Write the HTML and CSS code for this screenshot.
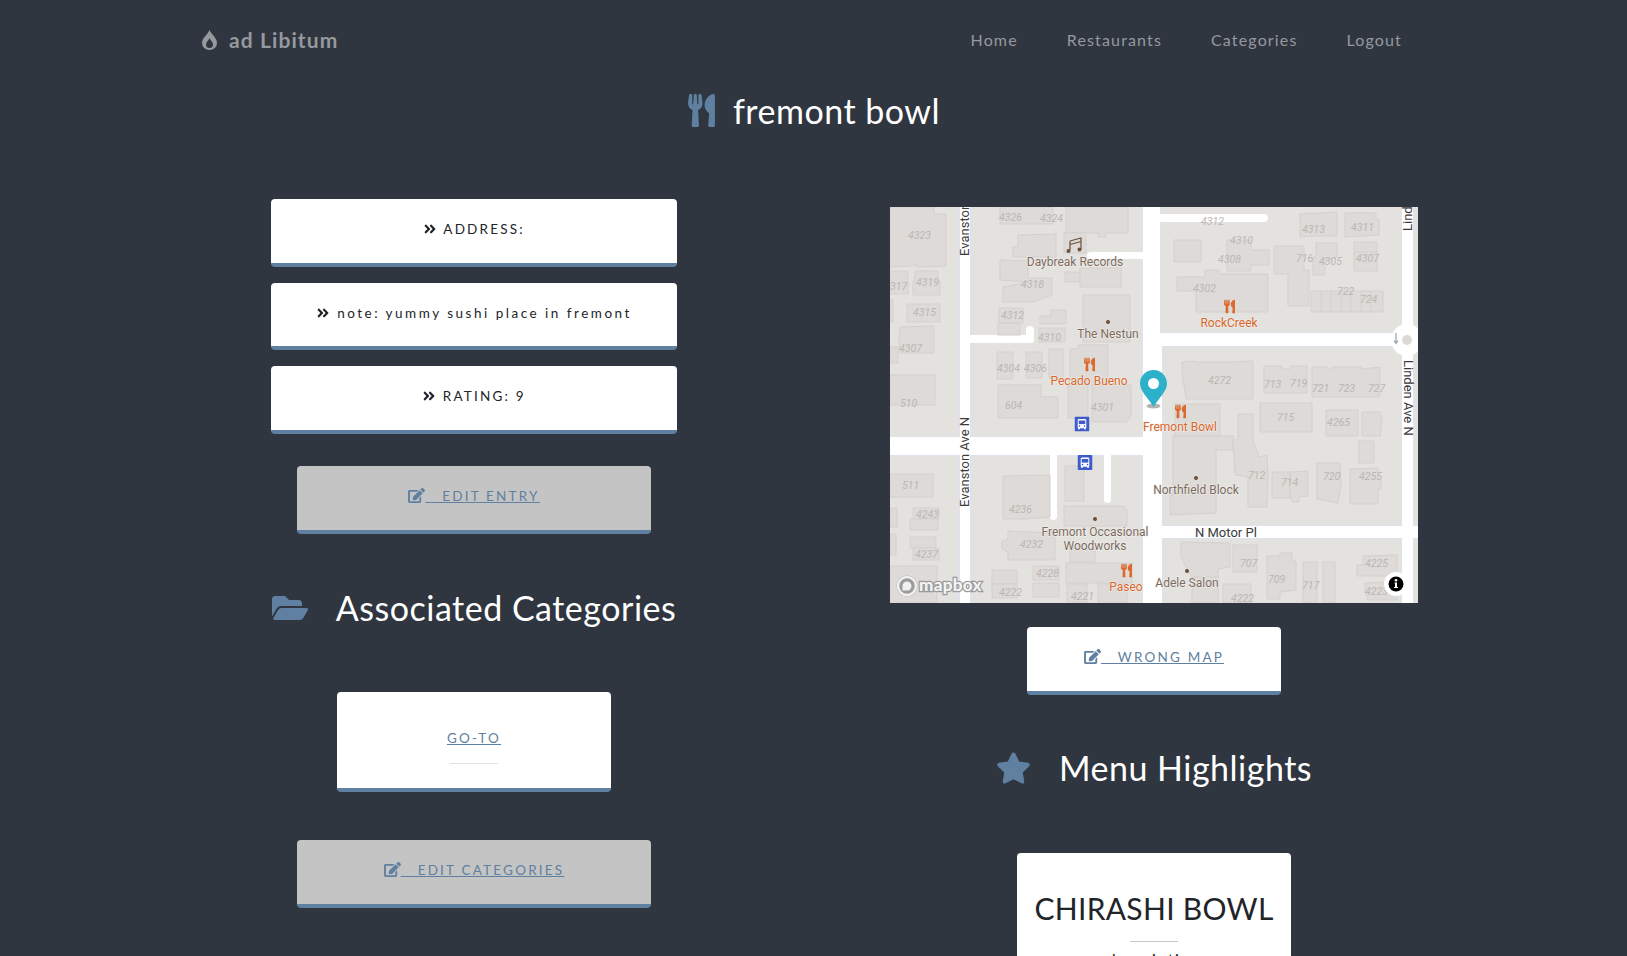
FILE: index.html
```html
<!DOCTYPE html>
<html>
<head>
<title>fremont bowl</title>
<meta charset="utf-8">
<link rel="stylesheet" href="styles.css">
</head>
<body>

<svg class="defs" width="0" height="0">
  <defs>
    <symbol id="i-utensils" viewBox="0 0 416 512"><path d="M207.9 15.2c.8 4.7 16.1 94.5 16.1 128.8 0 52.3-27.8 89.6-68.9 104.6L168 486.7c.7 13.7-10.2 25.3-24 25.3H80c-13.7 0-24.7-11.5-24-25.3l12.9-238.1C27.7 233.6 0 196.2 0 144 0 109.6 15.3 19.9 16.1 15.2 19.3-5.1 61.4-5.4 64 16.3v141.2c1.3 3.4 15.1 3.2 16 0 1.4-25.3 7.9-139.2 8-141.8 3.3-20.8 44.7-20.8 47.9 0 .2 2.7 6.6 116.5 8 141.8.9 3.2 14.8 3.4 16 0V16.3c2.6-21.6 44.8-21.4 48-1.1zm119.2 285.7l-15 185.1c-1.2 14 9.9 26 23.9 26h56c13.3 0 24-10.7 24-24V24c0-13.2-10.7-24-24-24-82.5 0-221.4 178.5-64.9 300.9z"/></symbol>
    <symbol id="i-chevrons" viewBox="0 0 448 512"><path d="M224.3 273l-136 136c-9.4 9.4-24.6 9.4-33.9 0l-22.6-22.6c-9.4-9.4-9.4-24.6 0-33.9l96.4-96.4-96.4-96.4c-9.4-9.4-9.4-24.6 0-33.9L54.3 103c9.4-9.4 24.6-9.4 33.9 0l136 136c9.5 9.4 9.5 24.6.1 34zm192-34l-136-136c-9.4-9.4-24.6-9.4-33.9 0l-22.6 22.6c-9.4 9.4-9.4 24.6 0 33.9l96.4 96.4-96.4 96.4c-9.4 9.4-9.4 24.6 0 33.9l22.6 22.6c9.4 9.4 24.6 9.4 33.9 0l136-136c9.4-9.2 9.4-24.4 0-33.8z"/></symbol>
    <symbol id="i-edit" viewBox="0 0 576 512"><path d="M402.6 83.2l90.2 90.2c3.8 3.8 3.8 10 0 13.8L274.4 405.6l-92.8 10.3c-12.4 1.4-22.9-9.1-21.5-21.5l10.3-92.8L388.8 83.2c3.8-3.8 10-3.8 13.8 0zm162-22.9l-48.8-48.8c-15.2-15.2-39.9-15.2-55.2 0l-35.4 35.4c-3.8 3.8-3.8 10 0 13.8l90.2 90.2c3.8 3.8 10 3.8 13.8 0l35.4-35.4c15.2-15.3 15.2-40 0-55.2zM384 346.2V448H64V128h229.8c3.2 0 6.2-1.3 8.5-3.5l40-40c7.6-7.6 2.2-20.5-8.5-20.5H48C21.5 64 0 85.5 0 112v352c0 26.5 21.5 48 48 48h352c26.5 0 48-21.5 48-48V306.2c0-10.7-12.9-16-20.5-8.5l-40 40c-2.2 2.3-3.5 5.3-3.5 8.5z"/></symbol>
    <symbol id="m-bus" viewBox="0 0 15 15"><rect width="15" height="15" rx="1" fill="#3e5ccb"/><path fill="#fff" d="M4.6 2.6h5.8c.8 0 1.4.6 1.4 1.4v7c0 .4-.2.6-.5.7v.9c0 .3-.2.5-.5.5h-.6c-.3 0-.5-.2-.5-.5v-.8H5.3v.8c0 .3-.2.5-.5.5h-.6c-.3 0-.5-.2-.5-.5v-.9c-.3-.1-.5-.3-.5-.7V4c0-.8.6-1.4 1.4-1.4z"/><rect x="4.2" y="4" width="6.6" height="3.6" fill="#3e5ccb"/><circle cx="5" cy="9.6" r=".8" fill="#3e5ccb"/><circle cx="10" cy="9.6" r=".8" fill="#3e5ccb"/></symbol>
  </defs>
</svg>

<nav class="navbar">
  <a class="brand">
    <svg class="brand-icon" viewBox="0 0 15 20"><path fill-rule="evenodd" d="M7.500 0C8.500 3.500 15 7.500 15 13a7.500 7 0 0 1-15 0C0 8 5.500 5 7.500 0zM7.500 8c-.8 2.500-3.500 4-3.500 6.500a3.500 3.500 0 0 0 7 0C11 12 8.300 10.500 7.500 8z"/></svg>
    <span class="brand-text">ad Libitum</span>
  </a>
  <ul class="nav-links">
    <li>Home</li>
    <li>Restaurants</li>
    <li>Categories</li>
    <li>Logout</li>
  </ul>
</nav>

<h1 class="page-title">
  <svg class="title-icon"><use href="#i-utensils"/></svg>
  <span>fremont bowl</span>
</h1>

<div class="columns">

  <div class="col">
    <div class="card card-wide"><svg class="chev"><use href="#i-chevrons"/></svg> ADDRESS:</div>
    <div class="card card-wide card-note"><svg class="chev"><use href="#i-chevrons"/></svg> note: yummy sushi place in fremont</div>
    <div class="card card-wide"><svg class="chev"><use href="#i-chevrons"/></svg> RATING: 9</div>
    <div class="card card-action"><a class="link"><svg class="edit"><use href="#i-edit"/></svg>&nbsp;&nbsp;&nbsp;EDIT ENTRY</a></div>

    <h2 class="heading heading-cats">
      <svg class="folder" viewBox="0 0 576 512"><path d="M572.694 292.093L500.27 416.248A63.997 63.997 0 0 1 444.989 448H45.025c-18.523 0-30.064-20.093-20.731-36.093l72.424-124.155A64 64 0 0 1 152 256h399.964c18.523 0 30.064 20.093 20.73 36.093zM152 224h328v-48c0-26.51-21.49-48-48-48H272l-64-64H48C21.49 64 0 85.49 0 112v278.046l69.077-118.418C86.214 242.25 118.036 224 152 224z"/></svg>
      <span>Associated Categories</span>
    </h2>

    <div class="card card-small goto">
      <a class="link">GO-TO</a>
      <hr class="rule">
    </div>
    <div class="card card-action edit-cats"><a class="link"><svg class="edit"><use href="#i-edit"/></svg>&nbsp;&nbsp;&nbsp;EDIT CATEGORIES</a></div>
  </div>

  <div class="col col-right">
    <svg class="map" viewBox="0 0 528 396" width="528" height="396">
      <rect class="land" width="528" height="396"/>

      <!-- roads -->
      <g class="casing">
        <rect x="68" y="0" width="14" height="396"/>
        <rect x="252" y="0" width="19" height="139"/>
        <rect x="252" y="139" width="21" height="257"/>
        <rect x="511" y="0" width="13" height="396"/>
        <rect x="0" y="229" width="272" height="20"/>
        <rect x="270" y="125" width="258" height="15"/>
        <rect x="270" y="318" width="258" height="14"/>
      </g>
      <g class="road">
        <rect x="70" y="0" width="10" height="396"/>
        <rect x="253" y="0" width="17" height="139"/>
        <rect x="253" y="139" width="19" height="257"/>
        <rect x="512" y="0" width="11" height="396"/>
        <rect x="0" y="230" width="272" height="18"/>
        <rect x="270" y="126" width="258" height="13"/>
        <rect x="270" y="319" width="258" height="12"/>
        <rect x="268" y="7" width="110" height="8" rx="4"/>
        <rect x="197" y="45" width="60" height="7" rx="3.500"/>
        <rect x="78" y="128" width="66" height="8" rx="3"/>
        <rect x="136" y="119" width="8" height="17" rx="4"/>
        <rect x="160" y="245" width="7" height="68" rx="3.500"/>
        <rect x="214" y="245" width="7" height="51" rx="3.500"/>
        <circle cx="517" cy="133" r="16"/>
      </g>
      <circle class="island" cx="517" cy="133" r="5"/>
      <path class="arrow" d="M506 126v10M504 133.500l2 3 2-3"/>

      <!-- buildings -->
      <g class="bld">
        <polygon points="0,0 44,0 44,7 56,7 56,59 27,60 26,58 20,59 0,60"/>
        <rect x="110" y="0" width="53" height="17"/>
        <polygon points="176,0 238,0 238,26 216,26 216,30 208,30 208,26 176,26"/>
        <rect x="174" y="26" width="22" height="20"/>
        <polygon points="128,28 166,27 166,50 128,50 123,50 123,40 128,40"/>
        <polygon points="110,53 138,54 138,71 162,71 162,88 143,95 113,95 113,80 138,75 110,73"/>
        <rect x="175" y="65" width="15" height="10"/>
        <rect x="190" y="61" width="41" height="19"/>
        <rect x="193" y="88" width="47" height="47"/>
        <rect x="0" y="64" width="18" height="23"/>
        <polygon points="25,64 48,64 48,74 50,74 50,88 23,88 23,74 25,74"/>
        <rect x="17" y="97" width="33" height="18"/>
        <rect x="0" y="93" width="3" height="22"/>
        <polygon points="10,120 44,119 44,146 10,146 9,133"/>
        <rect x="0" y="140" width="8" height="16"/>
        <rect x="0" y="168" width="45" height="30"/>
        <rect x="109" y="101" width="24" height="15"/>
        <rect x="108" y="116" width="22" height="12"/>
        <polygon points="150,109 161,109 161,103 176,103 176,117 150,117"/>
        <rect x="149" y="121" width="26" height="14"/>
        <rect x="107" y="145" width="16" height="27"/>
        <rect x="136" y="145" width="16" height="26"/>
        <rect x="159" y="142" width="14" height="29"/>
        <polygon points="180,142 188,142 188,138 218,138 218,178 180,178"/>
        <polygon points="108,178 151,178 151,190 168,190 168,211 108,211"/>
        <rect x="178" y="178" width="20" height="33"/>
        <polygon points="202,178 241,178 241,209 236,215 202,215"/>

        <polygon points="410,7 447,5 447,29 423,29 410,30"/>
        <polygon points="455,6 486,6 486,12 489,12 489,28 455,30"/>
        <rect x="284" y="33" width="27" height="22"/>
        <polygon points="337,33 361,33 361,43 379,43 379,58 361,58 361,64 337,64"/>
        <polygon points="384,39 414,39 414,63 419,63 419,99 398,99 398,67 384,67"/>
        <polygon points="426,36 447,36 447,50 435,55 435,68 423,68 423,50 426,50"/>
        <rect x="464" y="35" width="23" height="29"/>
        <rect x="421" y="84" width="72" height="21"/>
        <polygon points="287,70 315,70 315,63 329,63 329,67 378,67 378,105 306,105 306,84 287,84"/>
        <polygon points="292,155 305,154 305,155 340,155 363,154 363,192 296,192 292,165"/>
        <polygon points="374,159 392,159 392,162 400,162 400,159 417,159 417,186 374,186"/>
        <polygon points="422,160 437,160 437,162 443,162 443,160 472,160 472,162 490,160 490,190 422,190"/>
        <rect x="285" y="197" width="45" height="32"/>
        <polygon points="283,229 343,229 343,243 326,243 326,306 280,308 280,288 283,288"/>
        <polygon points="348,207 363,207 363,233 369,250 377,248 378,270 377,300 358,300 358,270 345,268 343,233 348,233"/>
        <polygon points="370,196 422,196 422,225 370,225"/>
        <polygon points="436,203 468,203 468,229 436,229"/>
        <polygon points="472,205 490,205 492,215 490,229 472,229"/>
        <rect x="469" y="234" width="15" height="22"/>
        <rect x="382" y="265" width="18" height="26"/>
        <polygon points="400,265 418,264 418,289 409,290 409,295 403,295 400,290"/>
        <polygon points="427,256 450,256 451,278 448,296 427,292"/>
        <polygon points="460,262 488,261 488,273 491,273 491,282 488,282 488,297 460,297"/>
        <polygon points="291,335 340,336 340,360 328,362 328,371 302,371 295,358 291,350"/>
        <rect x="302" y="370" width="26" height="26"/>
        <rect x="333" y="377" width="28" height="19"/>
        <rect x="343" y="338" width="24" height="27"/>
        <polygon points="377,349 390,349 390,346 402,346 402,354 406,354 406,383 390,385 390,392 377,392"/>
        <rect x="413" y="355" width="14" height="41"/>
        <rect x="433" y="355" width="12" height="41"/>
        <polygon points="473,349 507,348 507,369 467,369 467,358 473,358"/>
        <polygon points="475,376 507,375 507,393 478,393 475,386"/>

        <rect x="0" y="267" width="43" height="23"/>
        <rect x="23" y="301" width="26" height="11"/>
        <rect x="20" y="312" width="28" height="11"/>
        <rect x="0" y="301" width="7" height="19"/>
        <rect x="20" y="330" width="26" height="11"/>
        <rect x="23" y="341" width="26" height="12"/>
        <rect x="0" y="327" width="6" height="21"/>
        <rect x="0" y="359" width="47" height="37"/>
        <polygon points="113,269 160,268 160,310 135,312 113,312"/>
        <rect x="175" y="259" width="19" height="35"/>
        <polygon points="174,299 234,299 237,303 237,319 174,319"/>
        <polygon points="118,324 165,326 165,353 118,353 118,345 112,342 112,334 118,332"/>
        <rect x="180" y="341" width="25" height="14"/>
        <rect x="143" y="359" width="26" height="14"/>
        <rect x="143" y="376" width="26" height="14"/>
        <rect x="102" y="363" width="25" height="14"/>
        <rect x="102" y="377" width="25" height="14"/>
        <rect x="176" y="356" width="66" height="20"/>
        <rect x="177" y="377" width="20" height="19"/>
        <rect x="208" y="377" width="29" height="19"/>
      </g>
      <path class="bld-line" d="M431 84v21M441 84v21M451 84v21M461 84v21M471 84v21M481 84v21M464 45h23"/>

      <!-- house numbers -->
      <g class="num">
        <text x="18" y="32">4323</text><text x="109" y="14">4326</text><text x="150" y="15">4324</text>
        <text x="131" y="81">4318</text><text x="111" y="112">4312</text><text x="0" y="83">317</text>
        <text x="26" y="79">4319</text><text x="23" y="109">4315</text><text x="9" y="145">4307</text>
        <text x="148" y="134">4310</text><text x="107" y="165">4304</text><text x="134" y="165">4306</text>
        <text x="10" y="200">510</text><text x="115" y="202">604</text><text x="201" y="204">4301</text>
        <text x="311" y="18">4312</text><text x="340" y="37">4310</text><text x="328" y="56">4308</text>
        <text x="303" y="85">4302</text><text x="412" y="26">4313</text><text x="461" y="24">4311</text>
        <text x="406" y="55">716</text><text x="429" y="58">4305</text><text x="466" y="55">4307</text>
        <text x="447" y="88">722</text><text x="470" y="96">724</text><text x="318" y="177">4272</text>
        <text x="374" y="181">713</text><text x="400" y="180">719</text><text x="422" y="185">721</text>
        <text x="448" y="185">723</text><text x="478" y="185">727</text><text x="387" y="214">715</text>
        <text x="437" y="219">4265</text><text x="358" y="272">712</text><text x="391" y="279">714</text>
        <text x="433" y="273">720</text><text x="469" y="273">4255</text><text x="350" y="360">707</text>
        <text x="378" y="376">709</text><text x="412" y="382">717</text><text x="475" y="360">4225</text>
        <text x="475" y="388">4223</text><text x="341" y="395">4222</text><text x="12" y="282">511</text>
        <text x="26" y="311">4243</text><text x="25" y="351">4237</text><text x="119" y="306">4236</text>
        <text x="130" y="341">4232</text><text x="146" y="370">4228</text><text x="109" y="389">4222</text>
        <text x="181" y="393">4221</text>
      </g>

      <!-- street names -->
      <g class="street">
        <text transform="translate(79 49) rotate(-90)">Evanston</text>
        <text transform="translate(79 300) rotate(-90)">Evanston Ave N</text>
        <text transform="translate(522 24) rotate(-90)">Lind</text>
        <text transform="translate(514 153) rotate(90)">Linden Ave N</text>
        <text x="305" y="330">N Motor Pl</text>
      </g>

      <!-- places -->
      <g class="poi">
        <text x="185" y="59">Daybreak Records</text>
        <text x="218" y="131">The Nestun</text>
        <text x="306" y="287">Northfield Block</text>
        <text x="205" y="329">Fremont Occasional</text>
        <text x="205" y="343">Woodworks</text>
        <text x="297" y="380">Adele Salon</text>
      </g>
      <g class="poi food">
        <text x="199" y="178">Pecado Bueno</text>
        <text x="339" y="120">RockCreek</text>
        <text x="290" y="224">Fremont Bowl</text>
        <text x="236" y="384">Paseo</text>
      </g>
      <g class="food-icon">
        <use href="#i-utensils" x="194" y="150" width="11" height="15"/>
        <use href="#i-utensils" x="334" y="92" width="11" height="15"/>
        <use href="#i-utensils" x="285" y="197" width="11" height="15"/>
        <use href="#i-utensils" x="231" y="356" width="11" height="15"/>
      </g>
      <g class="dot">
        <circle cx="218" cy="115" r="2"/><circle cx="306" cy="271" r="2"/>
        <circle cx="297" cy="364" r="2"/><circle cx="205" cy="312" r="2"/>
      </g>
      <path class="note" d="M180 34l11-3v11M180 34v9M180 37.500l11-3"/>
      <circle class="note-head" cx="178.500" cy="44" r="2"/><circle class="note-head" cx="189.500" cy="42.500" r="2"/>
      <use href="#m-bus" x="184.500" y="209.500" width="15" height="15"/>
      <use href="#m-bus" x="187.500" y="248" width="15" height="15"/>

      <!-- marker -->
      <ellipse class="pin-shadow" cx="263.500" cy="199" rx="7" ry="2.500"/>
      <path class="pin" d="M263.500 163c-7.500 0-13.500 6-13.500 13.500 0 8 8.500 14.500 13.500 23.500 5-9 13.500-15.500 13.500-23.500 0-7.500-6-13.500-13.500-13.500z"/>
      <circle class="pin-hole" cx="263.500" cy="176.500" r="5.500"/>

      <!-- controls -->
      <circle class="logo-edge" cx="17" cy="379" r="10.500"/>
      <circle class="logo-ring" cx="17" cy="379" r="9"/>
      <path class="logo-bubble" d="M12.500 383.500v-4.500a4.500 4.500 0 1 1 4.500 4.500z"/>
      <text class="logo" x="29" y="384">mapbox</text>
      <circle class="info-bg" cx="506" cy="377" r="12"/>
      <circle class="info" cx="506" cy="377" r="7.500"/>
      <circle class="info-mark" cx="506" cy="373.300" r="1.300"/>
      <path class="info-mark" d="M504.500 375.500h2.500v4.500h1v1h-4v-1h1v-3.500h-.5z"/>
    </svg>

    <div class="card card-map"><a class="link"><svg class="edit"><use href="#i-edit"/></svg>&nbsp;&nbsp;&nbsp;WRONG MAP</a></div>

    <h2 class="heading heading-menu">
      <svg class="star" viewBox="0 0 576 512"><path d="M259.3 17.8L194 150.2 47.9 171.5c-26.2 3.800-36.700 36.100-17.700 54.600l105.700 103-25 145.500c-4.500 26.300 23.200 46 46.400 33.700L288 439.600l130.700 68.700c23.200 12.200 50.900-7.400 46.400-33.700l-25-145.500 105.700-103c19-18.500 8.500-50.800-17.700-54.600L382 150.200 316.700 17.800c-11.700-23.600-45.600-23.900-57.400 0z"/></svg>
      <span>Menu Highlights</span>
    </h2>

    <div class="card card-small dish">
      <div class="dish-name">CHIRASHI BOWL</div>
      <hr class="rule rule-dark">
      <div class="dish-desc">description</div>
    </div>
  </div>

</div>

</body>
</html>
```

FILE: styles.css
```css
html{height:100%;overflow:hidden;}
body{margin:0;height:100%;overflow:hidden;background:#2f3640;color:#212529;font-family:"Lato","Noto Sans",sans-serif;}
a{cursor:pointer;}
.defs{position:absolute;}

.navbar{display:flex;justify-content:space-between;align-items:center;height:80px;padding:0 225px 0 202px;}
.brand{display:flex;align-items:center;gap:12px;color:#96999e;font-size:21px;font-weight:700;letter-spacing:1.100px;}
.brand-icon{width:15px;height:20px;fill:#96999e;}
.brand-text{margin-top:-2px;}
.nav-links{display:flex;gap:49px;margin:-1px 0 0;padding:0;list-style:none;color:#96999e;font-size:16px;letter-spacing:1.150px;}

.page-title{display:flex;justify-content:center;align-items:center;gap:18px;height:60px;margin:0 0 59px;padding-left:1px;color:#fff;font-size:34px;font-weight:400;letter-spacing:.5px;}
.title-icon{width:27px;height:33px;fill:#5f80a0;}

.columns{display:grid;grid-template-columns:540px 540px;column-gap:140px;padding-left:204px;}
.col{display:flex;flex-direction:column;align-items:center;}

.card{background:#fff;border-bottom:4px solid #5f80a0;border-radius:4px;text-align:center;font-size:13.500px;letter-spacing:2.200px;line-height:19.500px;box-sizing:border-box;}
.card-wide{width:406px;height:67.500px;padding-top:21px;margin-bottom:16px;}
.card-note{letter-spacing:2.500px;}
.card-action{width:354px;height:68px;padding-top:21px;margin-top:16px;background:#c4c4c4;}
.card-map{width:254px;height:67.500px;padding-top:21px;margin-top:24px;}
.card-small{width:274px;}
.goto{height:100px;padding-top:37px;}
.edit-cats{margin-top:48px;}

.chev{width:14px;height:14px;vertical-align:-2px;fill:#212529;margin-right:1px;}
.link{color:#5f80a0;text-decoration:underline;}
.edit{width:17px;height:15px;vertical-align:-2px;fill:#5f80a0;}

.heading{display:flex;justify-content:center;align-items:center;gap:28px;margin:0;height:52px;color:#fff;font-size:34px;font-weight:400;letter-spacing:.5px;}
.heading-cats{margin:48px 0 58px;}
.heading-menu{margin:47px 0 59px;}
.folder{width:36px;height:32px;fill:#5f80a0;}
.star{width:35px;height:32px;fill:#5f80a0;}

.rule{width:48px;margin:15px auto 0;border:0;border-top:1px solid #dee2e6;}
.rule-dark{border-top-color:#c8c8c8;margin-top:13px;}
.dish{padding:35px 0 20px;height:200px;}
.dish-name{font-size:30px;letter-spacing:.3px;line-height:40px;}
.dish-desc{margin-top:7px;font-size:16px;letter-spacing:1.500px;color:#212529;}

.map{display:block;margin-top:8px;}
.land{fill:#e4e2df;}
.casing{fill:#dfe1ec;}
.road{fill:#fff;}
.island{fill:#dcdad7;}
.arrow{fill:none;stroke:#9aa3b5;stroke-width:1.200;}
.bld{fill:#dddad7;stroke:#d3d0cd;stroke-width:1;}
.bld-line{fill:none;stroke:#d3d0cd;stroke-width:1;}
.num{fill:#bab7b4;font-family:"Roboto",sans-serif;font-size:10.500px;font-style:italic;}
.street{fill:#3a3a3a;font-family:"Roboto",sans-serif;font-size:13px;}
.poi{fill:#7c6a5d;font-family:"Roboto",sans-serif;font-size:12px;text-anchor:middle;paint-order:stroke;stroke:#f2f1ef;stroke-width:1;}
.food{fill:#d9652b;}
.food-icon{fill:#dc6a2e;}
.dot,.note-head{fill:#6b4f3a;}
.note{fill:none;stroke:#6b4f3a;stroke-width:1.200;}
.pin{fill:#2db0ca;}
.pin-hole{fill:#fff;}
.pin-shadow{fill:#000;opacity:.3;}
.logo-edge{fill:#a3a3a3;}
.logo-ring{fill:#9c9c9c;stroke:#f1f1f1;stroke-width:2.500;}
.logo-bubble{fill:#f1f1f1;}
.logo{fill:#f4f4f4;font-family:"Lato",sans-serif;font-size:17px;font-weight:900;letter-spacing:.3px;paint-order:stroke;stroke:#9a9a9a;stroke-width:2.500;}
.info-bg{fill:#fff;}
.info{fill:#000;}
.info-mark{fill:#fff;}
```
